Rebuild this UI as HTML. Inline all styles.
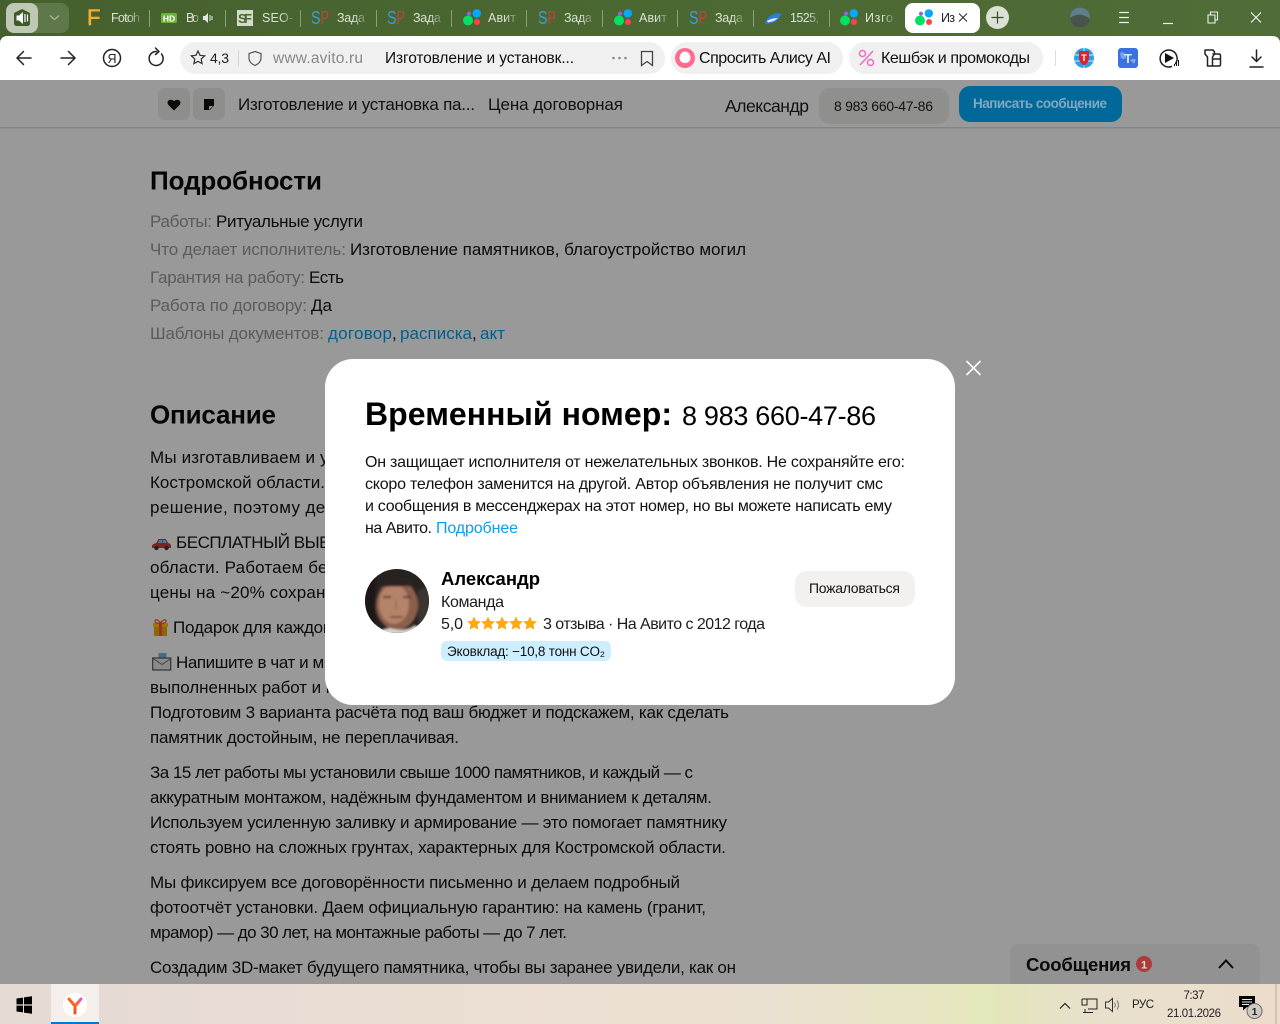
<!DOCTYPE html>
<html lang="ru"><head><meta charset="utf-8"><title>Авито</title>
<style>
html,body{margin:0;padding:0;width:1280px;height:1024px;overflow:hidden;background:#999}
svg{display:block}
text{font-family:"Liberation Sans","Noto Sans CJK SC",sans-serif;white-space:pre}
.b{font-size:17px;fill:#0b0b0b}
.g{font-size:17px;fill:#5b5b5b}
.k{font-size:17px;fill:#0b0b0b}
.l{font-size:17px;fill:#005f8f}
.h{font-size:26px;font-weight:bold;fill:#050505}
.t{font-size:12.5px;fill:url(#fade)}
.m{font-size:16px;fill:#111}
.u{font-size:16px;fill:#1c1c1c}
.i{fill:none;stroke:#222;stroke-width:1.5;stroke-linecap:round;stroke-linejoin:round}
</style></head><body>
<svg width="1280" height="1024" viewBox="0 0 1280 1024" xmlns="http://www.w3.org/2000/svg">
<defs>
<linearGradient id="fade" x1="0" x2="1" y1="0" y2="0"><stop offset="0" stop-color="#dbe1d2"/><stop offset=".6" stop-color="#dbe1d2"/><stop offset="1" stop-color="#dbe1d2" stop-opacity=".25"/></linearGradient>
<linearGradient id="tb" x1="0" x2="1" y1="0" y2="0"><stop offset="0" stop-color="#45602e"/><stop offset=".5" stop-color="#4b6832"/><stop offset="1" stop-color="#506c38"/></linearGradient>
<linearGradient id="task" x1="0" x2="1" y1="0" y2="0"><stop offset="0" stop-color="#e5dad4"/><stop offset=".45" stop-color="#ecdfd3"/><stop offset=".6" stop-color="#ebe1d2"/><stop offset=".77" stop-color="#e4e6bb"/><stop offset=".86" stop-color="#e8e0cc"/><stop offset="1" stop-color="#ecdccb"/></linearGradient>
<linearGradient id="ya" x1="0" x2="1" y1="1" y2="0"><stop offset="0" stop-color="#f03a17"/><stop offset=".6" stop-color="#ff6a20"/><stop offset="1" stop-color="#f050d0"/></linearGradient>
<clipPath id="av"><circle cx="397" cy="601" r="32"/></clipPath>
<filter id="soft" x="-10%" y="-10%" width="120%" height="120%"><feGaussianBlur stdDeviation="1"/></filter>
<symbol id="avi" viewBox="0 0 18 18"><circle cx="5" cy="11.5" r="5" fill="#04e061"/><circle cx="13.8" cy="4.4" r="4.2" fill="#0af"/><circle cx="14" cy="13" r="3" fill="#ff4053"/><circle cx="6" cy="4.6" r="2" fill="#965eeb"/></symbol>
<symbol id="sp" viewBox="0 0 18 18"><text x="0" y="15" font-size="18" fill="#3d9bd8" textLength="9.5" lengthAdjust="spacingAndGlyphs">S</text><text x="9.5" y="15" font-size="18" fill="#c8403a" textLength="8.5" lengthAdjust="spacingAndGlyphs">P</text></symbol>
</defs>

<!-- Page -->
<rect width="1280" height="1024" fill="#999"/>

<!-- Details -->
<text x="150" y="189.500" class="h" textLength="172">Подробности</text>
<text x="150" y="227" class="g" textLength="62">Работы:</text><text x="216" y="227" class="k" textLength="147">Ритуальные услуги</text>
<text x="150" y="255" class="g" textLength="196">Что делает исполнитель:</text><text x="350" y="255" class="k" textLength="396">Изготовление памятников, благоустройство могил</text>
<text x="150" y="283" class="g" textLength="155">Гарантия на работу:</text><text x="309" y="283" class="k" textLength="35">Есть</text>
<text x="150" y="311" class="g" textLength="157">Работа по договору:</text><text x="311" y="311" class="k" textLength="21">Да</text>
<text x="150" y="339" class="g" textLength="174">Шаблоны документов:</text><text x="328" y="339" class="l" textLength="64">договор</text><text x="392" y="339" class="k">,</text><text x="400" y="339" class="l" textLength="72">расписка</text><text x="472" y="339" class="k">,</text><text x="480" y="339" class="l" textLength="25">акт</text>

<text x="150" y="423.500" class="h" textLength="126">Описание</text>
<text x="150" y="463" class="b" textLength="187">Мы изготавливаем и ус</text>
<text x="150" y="488" class="b" textLength="175">Костромской области.</text>
<text x="150" y="513" class="b" textLength="185">решение, поэтому дел</text>
<!-- car -->
<g transform="translate(152,536)"><path d="M0 10.500c0-2 2-3 4-3.200L6.500 3h7l3 4.200c1.500.2 2.500 1 2.500 3.300v1.500H0z" fill="#7a2320"/><path d="M7.500 4h2.800v3H5.600zM11 4h2l2 3h-4z" fill="#4d7d95"/><circle cx="4.500" cy="12" r="2.200" fill="#222"/><circle cx="14.500" cy="12" r="2.200" fill="#222"/></g>
<text x="176" y="548" class="b" textLength="175">БЕСПЛАТНЫЙ ВЫЕЗД</text>
<text x="150" y="573" class="b" textLength="185">области. Работаем без</text>
<text x="150" y="598" class="b" textLength="185">цены на ~20% сохрани</text>
<!-- gift -->
<g transform="translate(152,619)"><rect x="1" y="4" width="15" height="4" fill="#a3720f"/><rect x="2" y="8" width="13" height="9" fill="#8f6509"/><rect x="7" y="4" width="3" height="13" fill="#93351f"/><path d="M8.500 4C6 0 2.500 0 3 2.500S7 4 8.500 4C11 0 14.500 0 14 2.500S10 4 8.500 4" fill="none" stroke="#93351f" stroke-width="1.200"/></g>
<text x="173" y="633" class="b" textLength="165">Подарок для каждого</text>
<!-- mailbox -->
<g transform="translate(152,653)"><rect x="6.500" y="0" width="8" height="6" fill="#3f6f84"/><rect x=".7" y="5" width="18" height="12" fill="#8a8a8a" stroke="#333" stroke-width="1.200"/><path d="M1 5.500l9 6 9-6" fill="none" stroke="#444" stroke-width="1"/></g>
<text x="176" y="668" class="b" textLength="160">Напишите в чат и мы</text>
<text x="150" y="693" class="b" textLength="185">выполненных работ и п</text>
<text x="150" y="718" class="b" textLength="579">Подготовим 3 варианта расчёта под ваш бюджет и подскажем, как сделать</text>
<text x="150" y="743" class="b" textLength="309">памятник достойным, не переплачивая.</text>
<text x="150" y="778" class="b" textLength="543">За 15 лет работы мы установили свыше 1000 памятников, и каждый — с</text>
<text x="150" y="803" class="b" textLength="562">аккуратным монтажом, надёжным фундаментом и вниманием к деталям.</text>
<text x="150" y="828" class="b" textLength="577">Используем усиленную заливку и армирование — это помогает памятнику</text>
<text x="150" y="853" class="b" textLength="576">стоять ровно на сложных грунтах, характерных для Костромской области.</text>
<text x="150" y="888" class="b" textLength="530">Мы фиксируем все договорённости письменно и делаем подробный</text>
<text x="150" y="913" class="b" textLength="556">фотоотчёт установки. Даем официальную гарантию: на камень (гранит,</text>
<text x="150" y="938" class="b" textLength="417">мрамор) — до 30 лет, на монтажные работы — до 7 лет.</text>
<text x="150" y="973" class="b" textLength="586">Создадим 3D-макет будущего памятника, чтобы вы заранее увидели, как он</text>

<!-- Sticky header -->
<rect x="0" y="80" width="1280" height="47" fill="#999"/>
<rect x="0" y="127" width="1280" height="1.500" fill="#858585"/>
<rect x="158" y="88" width="32" height="32" rx="7" fill="#8e8e8c"/>
<rect x="193" y="88" width="32" height="32" rx="7" fill="#8e8e8c"/>
<path d="M174 110.500l-5.500-5.500c-3-3.300 1.500-7.500 5.500-3.800 4-3.700 8.500.5 5.500 3.800z" fill="#0a0a0a"/>
<path d="M204 99h10v6.500l-4 4.500h-6z" fill="#0a0a0a"/><path d="M209 110v-4h4z" fill="#8e8e8c"/>
<text x="238" y="110" font-size="17" fill="#111" textLength="237">Изготовление и установка па...</text>
<text x="488" y="110" font-size="17" fill="#111" textLength="135">Цена договорная</text>
<text x="725" y="112" font-size="17.500" fill="#111" textLength="84">Александр</text>
<rect x="819" y="88" width="130" height="36" rx="11" fill="#8f8f8d"/>
<text x="834" y="111" font-size="14" fill="#111" textLength="99">8 983 660-47-86</text>
<rect x="959" y="86" width="163" height="36" rx="11" fill="#00699a"/>
<text x="973" y="108" font-size="13.500" font-weight="bold" fill="#7fa9c1" textLength="134">Написать сообщение</text>

<!-- Messages panel -->
<rect x="1010" y="944" width="250" height="44" rx="8" fill="#929292"/>
<text x="1026" y="971" font-size="18.500" font-weight="bold" fill="#0b0b0b" textLength="105">Сообщения</text>
<circle cx="1144" cy="964" r="8" fill="#ac3c3c"/><text x="1144" y="968.500" font-size="11" font-weight="bold" fill="#e8d8d8" text-anchor="middle">1</text>
<path d="M1219 968l7-7.500 7 7.500" fill="none" stroke="#0b0b0b" stroke-width="2"/>

<!-- Modal -->
<rect x="325" y="359" width="630" height="346" rx="28" fill="#fff"/>
<path d="M966.500 361l14 14M980.500 361l-14 14" stroke="#fff" stroke-width="1.600"/>
<text x="365" y="425" font-size="32" font-weight="bold" fill="#000" textLength="307">Временный номер:</text>
<text x="682" y="425" font-size="27" fill="#000" textLength="194">8 983 660-47-86</text>
<text x="365" y="467" class="m" textLength="540">Он защищает исполнителя от нежелательных звонков. Не сохраняйте его:</text>
<text x="365" y="489" class="m" textLength="518">скоро телефон заменится на другой. Автор объявления не получит смс</text>
<text x="365" y="511" class="m" textLength="527">и сообщения в мессенджерах на этот номер, но вы можете написать ему</text>
<text x="365" y="533" class="m" textLength="67">на Авито.</text><text x="436" y="533" font-size="16" fill="#0a9df0" textLength="82">Подробнее</text>

<!-- Avatar -->
<g clip-path="url(#av)"><rect x="365" y="569" width="64" height="64" fill="#262220"/>
<g filter="url(#soft)">
<rect x="365" y="569" width="10" height="64" fill="#1a1714"/>
<path d="M418 590l11-4v35l-11 2z" fill="#3a3532"/>
<ellipse cx="397" cy="605" rx="21" ry="25" fill="#8a5f4c"/>
<ellipse cx="394" cy="604" rx="15" ry="20" fill="#b5826b"/>
<path d="M376 592c2-10 12-15 23-15 10 0 18 5 20 14-3-3-7-5-12-5-9 1-19 0-25 1-3 1-5 3-6 5z" fill="#2a2320"/>
<path d="M383 597h8M403 597h8" stroke="#5a3a2d" stroke-width="2"/><path d="M396 600v9" stroke="#99695a" stroke-width="1.500"/><path d="M390 617h13" stroke="#74483a" stroke-width="1.600"/>
<path d="M378 634c3-5 8-7 16-5 8 2 16 0 21-4l10 9z" fill="#d9d4cf"/>
</g></g>
<text x="441" y="585" font-size="18.500" font-weight="bold" fill="#000" textLength="99">Александр</text>
<text x="441" y="607" class="u" textLength="63">Команда</text>
<text x="441" y="629" class="u" textLength="22">5,0</text>
<g fill="#ffa90f"><path id="s" d="M474 616.500l2.100 4.400 4.800.6-3.500 3.300.9 4.800-4.300-2.400-4.300 2.400.9-4.800-3.500-3.300 4.800-.6z"/><use href="#s" x="14"/><use href="#s" x="28"/><use href="#s" x="42"/><use href="#s" x="56"/></g>
<text x="543" y="629" class="u" textLength="222">3 отзыва · На Авито с 2012 года</text>
<rect x="441" y="641" width="170" height="20" rx="6" fill="#cceeff"/>
<text x="447" y="656" font-size="13.500" fill="#111" textLength="158">Эковклад: −10,8 тонн CO₂</text>
<rect x="795" y="571" width="120" height="36" rx="12" fill="#f2f1f0"/>
<text x="809" y="593" font-size="14" fill="#111" textLength="91">Пожаловаться</text>

<!-- Tab strip -->
<rect width="1280" height="40" fill="url(#tb)"/>
<rect x="6" y="3" width="63" height="30" rx="8" fill="#5f7849"/>
<rect x="6" y="3" width="32" height="30" rx="8" fill="#bfc8b3"/>
<path d="M14 13l8-4 8 4v10c0 2-1 3-3 3H17c-2 0-3-1-3-3z" fill="#3d5a29"/>
<path d="M16.500 15.500h2.500l4-3.500v12l-4-3.500h-2.500z" fill="#fff"/><path d="M25 14v8M27.500 14.500v7" stroke="#fff" stroke-width="1.200"/>
<path d="M50 15.500l4.500 4 4.500-4" fill="none" stroke="#a9b89a" stroke-width="1.300"/>
<g fill="#8ba076"><rect x="149" y="10" width="1" height="17"/><rect x="225" y="10" width="1" height="17"/><rect x="300" y="10" width="1" height="17"/><rect x="376" y="10" width="1" height="17"/><rect x="451" y="10" width="1" height="17"/><rect x="526" y="10" width="1" height="17"/><rect x="602" y="10" width="1" height="17"/><rect x="677" y="10" width="1" height="17"/><rect x="753" y="10" width="1" height="17"/><rect x="829" y="10" width="1" height="17"/></g>
<text x="87" y="25" font-size="22" fill="#f7ab2c" stroke="#f7ab2c" stroke-width=".6">F</text>
<text x="111" y="22" class="t" textLength="29">Fotoh</text>
<rect x="161" y="13" width="16" height="10" rx="1.500" fill="#6cb33a"/><text x="169" y="21.500" font-size="8.500" font-weight="bold" fill="#fff" text-anchor="middle">HD</text>
<text x="186" y="22" class="t" textLength="13">Во</text>
<path d="M203 16h2l3-3v10l-3-3h-2z" fill="#e5e9e0"/><path d="M210 15v6M212 16v4" stroke="#e5e9e0"/>
<rect x="237" y="10" width="16" height="16" fill="#d3dbc9"/><text x="245" y="23" font-size="13" font-weight="bold" fill="#4b6832" text-anchor="middle" textLength="14">SF</text>
<text x="262" y="22" class="t" textLength="31">SEO-</text>
<use href="#sp" x="311" y="9" width="18" height="18"/><text x="337" y="22" class="t" textLength="28">Зада</text>
<use href="#sp" x="387" y="9" width="18" height="18"/><text x="413" y="22" class="t" textLength="28">Зада</text>
<use href="#avi" x="463" y="9" width="18" height="18"/><text x="488" y="22" class="t" textLength="28">Авит</text>
<use href="#sp" x="538" y="9" width="18" height="18"/><text x="564" y="22" class="t" textLength="28">Зада</text>
<use href="#avi" x="614" y="9" width="18" height="18"/><text x="639" y="22" class="t" textLength="28">Авит</text>
<use href="#sp" x="689" y="9" width="18" height="18"/><text x="715" y="22" class="t" textLength="28">Зада</text>
<path d="M765 23c1-5 6-9 14-10l2 1c-1 5-6 9-14 10z" fill="#2a7de1"/><path d="M767 21c3-2 7-3 11-3l-4 3-6 1.500z" fill="#e8eef8"/>
<text x="790" y="22" class="t" textLength="29">1525,</text>
<use href="#avi" x="840" y="9" width="18" height="18"/><text x="865" y="22" class="t" textLength="28">Изго</text>
<rect x="905" y="3" width="75" height="30" rx="8" fill="#fff"/>
<use href="#avi" x="915" y="9" width="18" height="18"/><text x="941" y="22" font-size="12.500" fill="#222" textLength="14">Из</text>
<path d="M959 13.500l8 8M967 13.500l-8 8" stroke="#333" stroke-width="1.100"/>
<circle cx="997.500" cy="17.500" r="11.500" fill="#dbe1d4"/><path d="M997.500 11.500v12M991.500 17.500h12" stroke="#384a2a" stroke-width="1.200"/>
<circle cx="1080" cy="17.500" r="10" fill="#5f7f8d"/><path d="M1070 18c4-3 9-4 12-3s6 2 8 4c-1 6-5 8.500-10 8.500s-9-3-10-9.500z" fill="#47544a"/>
<path d="M1119 12.500h10M1119 17.500h10M1119 22.500h10" stroke="#eef1ea" stroke-width="1.200"/>
<path d="M1163 23.500h10" stroke="#eef1ea" stroke-width="1.200"/>
<path d="M1208 15h7v8h-7zM1210.500 15v-3h7v8h-2.500" fill="none" stroke="#eef1ea" stroke-width="1.100"/>
<path d="M1251 12.500l10 10M1261 12.500l-10 10" stroke="#eef1ea" stroke-width="1.200"/>

<!-- Toolbar -->
<path d="M0 80V44q0-8 8-8h1264q8 0 8 8v36z" fill="#fff"/>
<path class="i" d="M31 58H17M23.500 51.500L17 58l6.500 6.500"/>
<path class="i" d="M61 58h14M68.500 51.500L75 58l-6.500 6.500"/>
<circle class="i" cx="112" cy="58" r="8.500"/><text x="112" y="63" font-size="12.500" fill="#222" text-anchor="middle">Я</text>
<path class="i" d="M161.500 54a7 7 0 1 1-5-2.500M155.500 48l3.500 3.500-3.500 3"/>
<rect x="180" y="42" width="485" height="32" rx="16" fill="#f0f0f0"/>
<path d="M198 51l2 4.300 4.700.5-3.500 3.200.9 4.600-4.100-2.300-4.100 2.300.9-4.600-3.500-3.200 4.700-.5z" fill="none" stroke="#333" stroke-width="1.200"/>
<text x="210" y="63" font-size="14" fill="#222" textLength="19">4,3</text>
<rect x="238" y="50" width="1" height="16" fill="#d5d5d5"/>
<path d="M255 51.500l6 2v4.500c0 3.500-2.500 6-6 7.500-3.500-1.500-6-4-6-7.500v-4.500z" fill="none" stroke="#555" stroke-width="1.200"/>
<text x="273" y="63" font-size="15.500" fill="#888" textLength="90">www.avito.ru</text>
<text x="385" y="63" font-size="15.500" fill="#111" textLength="189">Изготовление и установк...</text>
<circle cx="613.500" cy="58" r="1.300" fill="#888"/><circle cx="619.500" cy="58" r="1.300" fill="#888"/><circle cx="625.500" cy="58" r="1.300" fill="#888"/>
<path d="M641.500 51.500h11v14l-5.500-4-5.500 4z" fill="none" stroke="#444" stroke-width="1.300"/>
<rect x="671" y="42" width="172" height="32" rx="16" fill="#f0f0f0"/>
<circle cx="685" cy="58" r="10" fill="#ff6a8f"/><path d="M685 51.500c3.500 0 5.500 3.500 5.500 6.500s-2.500 5-5.500 5-5.500-2-5.500-5 2-6.500 5.500-6.500z" fill="#fff"/>
<text x="699" y="63" font-size="16" fill="#111" textLength="132">Спросить Алису AI</text>
<rect x="849" y="42" width="194" height="32" rx="16" fill="#f0f0f0"/>
<path d="M860 65l13-14" stroke="#f06cc0" stroke-width="1.500"/><circle cx="862.500" cy="53.500" r="3" fill="none" stroke="#f06cc0" stroke-width="1.500"/><circle cx="870.500" cy="62.500" r="3" fill="none" stroke="#f06cc0" stroke-width="1.500"/>
<text x="881" y="63" font-size="16" fill="#111" textLength="149">Кешбэк и промокоды</text>
<rect x="1055" y="50" width="1" height="16" fill="#ddd"/>
<circle cx="1084" cy="58" r="10" fill="#2aa0ea"/><path d="M1074 55h20M1074 61h20M1084 48v20" stroke="#cfeaff" stroke-width="1"/><path d="M1079 51h10v7c0 3.500-2.500 6-5 7.500-2.500-1.500-5-4-5-7.500z" fill="#d8242a"/><text x="1084" y="61" font-size="9" font-weight="bold" fill="#fff" text-anchor="middle">T</text>
<rect x="1118" y="48" width="20" height="20" rx="3" fill="#3a72e0"/><path d="M1120 53c3-2 5 0 6 3s-3 4-5 2zM1130 60c3-2 5-1 6 0l-2 4z" fill="#7aa5ee"/><text x="1128" y="63" font-size="13" font-weight="bold" fill="#dce8fb" text-anchor="middle">T</text>
<path class="i" d="M1175.500 63.500a8.500 8.500 0 1 0-4 3"/><path d="M1165 53l9 5-9 5z" fill="#111"/><path d="M1174.500 66v-2M1176.500 66v-4M1178.500 66v-6" stroke="#111" stroke-width="1"/>
<path class="i" d="M1205 50h8l1.500 2v2l-2 3v9h-5v-9l-2.500-3v-2zM1213 54h6c1 0 1.500 1 1.500 2v8c0 1-.5 2-1.500 2h-6.500M1213 59h7.500"/>
<path class="i" d="M1256.500 50v11M1252 57l4.500 4.500 4.500-4.500M1250 67h13"/>

<!-- Taskbar -->
<rect x="0" y="984" width="1280" height="40" fill="url(#task)"/>
<path d="M16.500 998.500l6.500-.9v6.800h-6.500zM24 997.400l8-1.200v8.200h-8zM16.500 1005.600h6.500v6.800l-6.500-.9zM24 1005.600h8v8.200l-8-1.200z" fill="#000"/>
<rect x="51" y="984" width="48" height="40" fill="#f4efeb"/>
<rect x="51" y="1022" width="48" height="2" fill="#0078d7"/>
<circle cx="75" cy="1005" r="12" fill="#fff"/>
<path d="M69 999l6 7 6-7M75 1006v7" fill="none" stroke="url(#ya)" stroke-width="3" stroke-linecap="round" stroke-linejoin="round"/>
<path d="M1060 1008.500l5-5 5 5" fill="none" stroke="#222" stroke-width="1.200"/>
<path d="M1082 999h15v10h-9M1082 999v6h5v-6M1085 1009v3M1083 1012.500h10" fill="none" stroke="#222" stroke-width="1"/>
<path d="M1105.500 1002h3l4-3.500v13l-4-3.500h-3z" fill="none" stroke="#333" stroke-width="1"/><path d="M1114.500 1002.500c1 1.500 1 3.500 0 5M1117 1000.500c2 2.500 2 6.500 0 9" fill="none" stroke="#777" stroke-width="1"/>
<text x="1132" y="1008" font-size="11.500" fill="#222" textLength="22">РУС</text>
<text x="1183.500" y="999" font-size="11.500" fill="#222" textLength="21">7:37</text>
<text x="1167" y="1017" font-size="11.500" fill="#222" textLength="54">21.01.2026</text>
<path d="M1239 996h16v11h-8l-4 3.500V1007h-4z" fill="#000"/><path d="M1242 999.500h10M1242 1002h10M1242 1004.500h7" stroke="#eee" stroke-width="1"/>
<circle cx="1254.500" cy="1011" r="7.500" fill="#cfcac4" stroke="#666"/><text x="1254.500" y="1015" font-size="10.500" font-weight="bold" fill="#222" text-anchor="middle">1</text>
<rect x="1275.500" y="984" width="1" height="40" fill="#b8ada2"/>
</svg>
</body></html>
